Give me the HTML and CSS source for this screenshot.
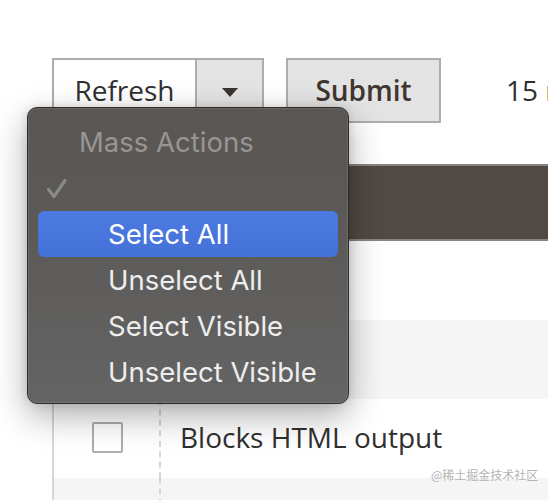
FILE: index.html
```html
<!DOCTYPE html>
<html lang="en">
<head>
<meta charset="utf-8">
<title>Mass Actions</title>
<link rel="stylesheet" href="styles.css">
</head>
<body>
<div class="page">
  <div class="toolbar">
    <div class="split">
      <div class="btn btn-main">Refresh</div>
      <div class="btn btn-toggle"><span class="caret"></span></div>
    </div>
    <div class="btn btn-submit">Submit</div>
    <span class="records">15 r</span>
  </div>
  <div class="grid">
    <div class="grid-head"></div>
    <div class="row">
      <div class="cell cell-check"><span class="checkbox"></span></div>
      <div class="cell cell-name"></div>
    </div>
    <div class="row row-alt">
      <div class="cell cell-check"><span class="checkbox"></span></div>
      <div class="cell cell-name"></div>
    </div>
    <div class="row">
      <div class="cell cell-check"><span class="checkbox"></span></div>
      <div class="cell cell-name">Blocks HTML output</div>
    </div>
    <div class="row row-alt">
      <div class="cell cell-check"><span class="checkbox"></span></div>
      <div class="cell cell-name"></div>
    </div>
  </div>
</div>

<div class="menu">
  <div class="menu-item menu-title">Mass Actions</div>
  <div class="menu-item menu-checked">
    <svg class="check" width="22" height="22" viewBox="0 0 22 22"><polyline points="2.5,11.5 8,18.5 19,2.5" fill="none" stroke="#8a8a8a" stroke-width="3.2" stroke-linecap="round" stroke-linejoin="round"/></svg>
  </div>
  <div class="menu-item menu-option is-active">Select All</div>
  <div class="menu-item menu-option">Unselect All</div>
  <div class="menu-item menu-option">Select Visible</div>
  <div class="menu-item menu-option">Unselect Visible</div>
</div>

<div class="watermark">@稀土掘金技术社区</div>
</body>
</html>
```

FILE: styles.css
```css
html, body {
  margin: 0;
  padding: 0;
  background: #ffffff;
  overflow: hidden;
}

body {
  width: 548px;
  height: 500px;
  position: relative;
  font-family: "Open Sans", "Liberation Sans", sans-serif;
  color: #303030;
}

.page {
  padding: 58px 0 0 52px;
}

.toolbar {
  display: flex;
  align-items: center;
  height: 65px;
  white-space: nowrap;
}

.split {
  display: flex;
  height: 100%;
  flex-shrink: 0;
}

.btn {
  box-sizing: border-box;
  flex-shrink: 0;
  height: 65px;
  display: flex;
  align-items: center;
  justify-content: center;
  font-size: 28px;
  border: 2px solid #adadad;
}

.btn-main {
  width: 145px;
  background: #ffffff;
  color: #303030;
  padding-bottom: 2px;
}

.btn-toggle {
  width: 67px;
  border-left: 0;
  background: #e3e3e3;
  padding-top: 4px;
}

.caret {
  width: 0;
  height: 0;
  border-left: 8px solid transparent;
  border-right: 8px solid transparent;
  border-top: 9px solid #3b3430;
}

.btn-submit {
  width: 155px;
  margin-left: 22px;
  background: #e3e3e3;
  color: #41362f;
  font-weight: 600;
  padding-bottom: 2px;
}

.records {
  flex-shrink: 0;
  margin-left: 65px;
  font-size: 28px;
  color: #303030;
  padding-bottom: 2px;
}

.grid {
  margin-top: 41px;
  width: 700px;
}

.grid-head {
  height: 73px;
  background: #514943;
  border-top: 2px solid #8a837f;
  border-bottom: 2px solid #8a837f;
}

.row {
  display: grid;
  grid-template-columns: 107px 1fr;
  height: 79px;
  background: #ffffff;
}

.row-alt {
  background: #f5f5f5;
}

.cell {
  display: flex;
  align-items: center;
  box-sizing: border-box;
}

.cell-check {
  justify-content: center;
  border-left: 2px solid #d6d6d6;
  padding-left: 2px;
}

.cell-name {
  border-left: 2px dashed #d6d6d6;
  padding-left: 19px;
  font-size: 28px;
  color: #303030;
  padding-bottom: 4px;
}

.checkbox {
  box-sizing: border-box;
  width: 31px;
  height: 31px;
  border: 2px solid #adadad;
  border-radius: 2px;
  background: #ffffff;
  margin-bottom: 2px;
}

/* Native-style popup menu overlay */
.menu {
  position: absolute;
  left: 27px;
  top: 107px;
  width: 322px;
  height: 297px;
  box-sizing: border-box;
  padding: 11px 10px 9px;
  border: 1px solid #2c2b2a;
  border-radius: 10px;
  background: linear-gradient(180deg, #595653 0%, #5c5a58 40%, #646464 100%);
  box-shadow: inset 0 0 0 1px rgba(255, 255, 255, 0.10), 0 12px 34px rgba(0, 0, 0, 0.32), 0 0 10px rgba(0, 0, 0, 0.12);
  font-family: "Inter", "Liberation Sans", sans-serif;
  font-size: 27.5px;
  color: #eeeeee;
  z-index: 2;
}

.menu-item {
  height: 46px;
  display: flex;
  align-items: center;
  box-sizing: border-box;
  border-radius: 6px;
  padding-bottom: 1px;
}

.menu-title {
  padding-left: 41px;
  color: #979695;
}

.menu-checked {
  padding-left: 8px;
  padding-top: 2px;
}

.check {
  display: block;
}

.menu-option {
  padding-left: 70px;
}

.menu-option.is-active {
  background: linear-gradient(180deg, #4b7ae0 0%, #4572d8 100%);
  color: #ffffff;
}

.watermark {
  position: absolute;
  left: 431px;
  top: 466px;
  font-family: "Noto Sans CJK SC", "Noto Sans", sans-serif;
  font-size: 12px;
  color: #b3b3b3;
  white-space: nowrap;
}
```
